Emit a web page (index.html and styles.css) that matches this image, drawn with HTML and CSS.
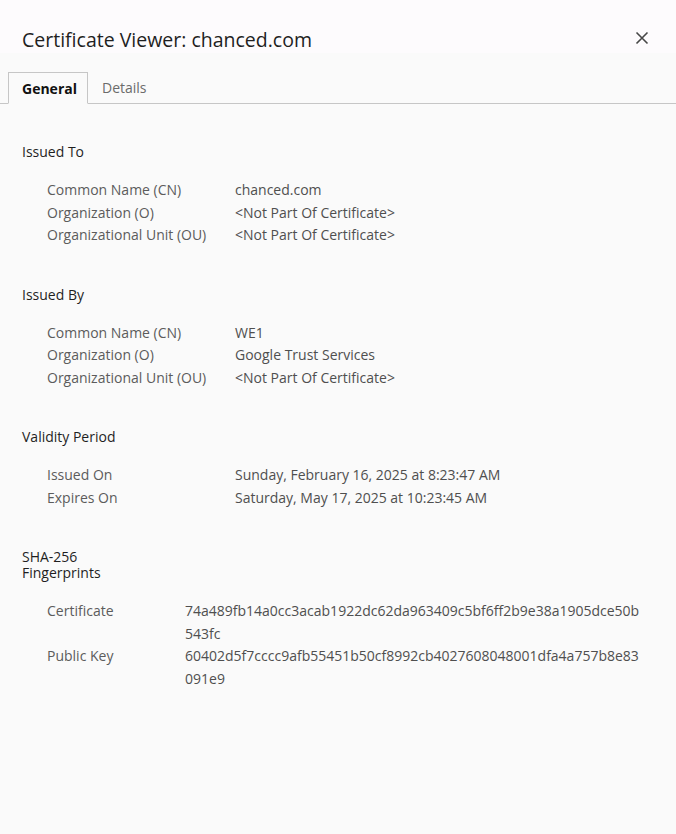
FILE: index.html
```html
<!DOCTYPE html>
<html lang="en">
<head>
<meta charset="utf-8">
<title>Certificate Viewer: chanced.com</title>
<link rel="stylesheet" href="styles.css">
</head>
<body>
<div class="dialog">
  <header class="header">
    <h1 class="title">Certificate Viewer: chanced.com</h1>
    <button class="close" aria-label="Close">
      <svg width="14" height="14" viewBox="0 0 14 14"><path d="M1.5 1.5 L12.5 12.5 M12.5 1.5 L1.5 12.5" stroke="#474747" stroke-width="1.6" fill="none"/></svg>
    </button>
  </header>
  <nav class="tabs">
    <div class="tab active">General</div>
    <div class="tab">Details</div>
  </nav>
  <main class="content">
    <section class="section">
      <h2 class="sec-title">Issued To</h2>
      <div class="rows">
        <div class="label">Common Name (CN)</div><div class="value">chanced.com</div>
        <div class="label">Organization (O)</div><div class="value">&lt;Not Part Of Certificate&gt;</div>
        <div class="label">Organizational Unit (OU)</div><div class="value">&lt;Not Part Of Certificate&gt;</div>
      </div>
    </section>
    <section class="section">
      <h2 class="sec-title">Issued By</h2>
      <div class="rows">
        <div class="label">Common Name (CN)</div><div class="value">WE1</div>
        <div class="label">Organization (O)</div><div class="value">Google Trust Services</div>
        <div class="label">Organizational Unit (OU)</div><div class="value">&lt;Not Part Of Certificate&gt;</div>
      </div>
    </section>
    <section class="section">
      <h2 class="sec-title">Validity Period</h2>
      <div class="rows">
        <div class="label">Issued On</div><div class="value">Sunday, February 16, 2025 at 8:23:47 AM</div>
        <div class="label">Expires On</div><div class="value">Saturday, May 17, 2025 at 10:23:45 AM</div>
      </div>
    </section>
    <section class="section">
      <h2 class="sec-title narrow">SHA-256 Fingerprints</h2>
      <div class="rows fp">
        <div class="label">Certificate</div><div class="value hash">74a489fb14a0cc3acab1922dc62da963409c5bf6ff2b9e38a1905dce50b543fc</div>
        <div class="label">Public Key</div><div class="value hash">60402d5f7cccc9afb55451b50cf8992cb4027608048001dfa4a757b8e83091e9</div>
      </div>
    </section>
  </main>
</div>
</body>
</html>
```

FILE: styles.css
```css
html, body {
  margin: 0;
  padding: 0;
  height: 100%;
}
body {
  background: #fafafa;
  font-family: "Segoe UI", "Open Sans", "Noto Sans", sans-serif;
  color: #555555;
}
.dialog {
  min-height: 834px;
  background: #fafafa;
}
.header {
  height: 53px;
  background: #fdfbfd;
  display: flex;
  align-items: flex-start;
  justify-content: space-between;
  padding: 28px 22px 0 22px;
  box-sizing: border-box;
}
.title {
  margin: 0;
  font-size: 19.5px;
  line-height: 24px;
  font-weight: 500;
  color: #1f1f1f;
  letter-spacing: 0;
}
.close {
  border: 0;
  background: transparent;
  padding: 0;
  margin: 3px 5px 0 0;
  width: 14px;
  height: 14px;
  display: flex;
}
.tabs {
  display: flex;
  margin-top: 19px;
  padding-left: 8px;
  border-bottom: 1px solid #c6c6c6;
  height: 31px;
}
.tab {
  font-size: 14px;
  line-height: 31px;
  padding: 0 14px 0 14px;
  color: #6b6b6b;
}
.tab.active {
  color: #111111;
  font-weight: 700;
  border: 1px solid #c6c6c6;
  border-bottom: 1px solid #fafafa;
  margin-bottom: -1px;
  padding: 0 10px 0 13px;
  background: #fafafa;
}
.content {
  padding: 40px 31px 0 22px;
}
.section {
  margin-bottom: 40px;
}
.sec-title {
  margin: 0 0 19px 0;
  font-size: 14px;
  line-height: 16px;
  font-weight: 400;
  color: #1f1f1f;
}
.sec-title.narrow {
  width: 90px;
}
.rows {
  display: grid;
  grid-template-columns: 188px 1fr;
  padding-left: 25px;
  font-size: 14px;
  line-height: 22.5px;
}
.rows.fp {
  grid-template-columns: 138px 1fr;
}
.label {
  color: #5c5c5c;
}
.value {
  color: #4f4f4f;
}
.hash {
  word-break: break-all;
}
```
